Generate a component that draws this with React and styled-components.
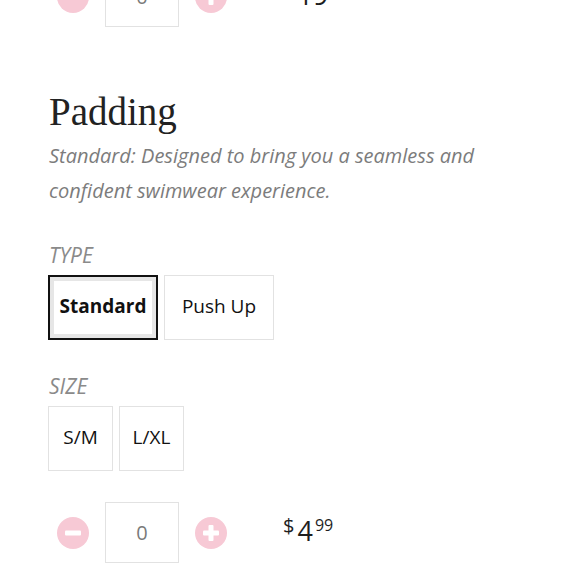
import styled, { createGlobalStyle } from 'styled-components'

const GlobalStyle = createGlobalStyle`
  html, body {
    margin: 0;
    padding: 0;
    background: #fff;
    overflow: hidden;
  }
  body {
    font-family: 'Open Sans', 'Liberation Sans', sans-serif;
  }
`

const Page = styled.div`
  width: 580px;
  height: 580px;
  overflow: hidden;
  padding-left: 48px;
  box-sizing: border-box;
`

const Scroller = styled.div`
  margin-top: -34px;
  display: flex;
  flex-direction: column;
`

const QtyRow = styled.div`
  display: flex;
  align-items: center;
  gap: 7px;
  height: 61px;
  margin-top: ${(props) => props.$top || 0}px;
`

const StepButton = styled.button`
  width: 50px;
  height: 50px;
  padding: 0;
  border: none;
  background: transparent;
  display: flex;
  align-items: center;
  justify-content: center;
  cursor: pointer;
`

const QtyBox = styled.div`
  width: 74px;
  height: 61px;
  box-sizing: border-box;
  border: 1px solid #e2e2e2;
  display: flex;
  align-items: center;
  justify-content: center;
  font-size: 20px;
  color: #7a7a7a;
`

const Price = styled.div`
  margin-left: 40px;
  display: flex;
  align-items: flex-start;
  color: #1e1e1e;
  align-self: flex-start;
  margin-top: 13px;
`

const Currency = styled.span`
  font-size: 20px;
  line-height: 22px;
  margin-right: 3px;
`

const Dollars = styled.span`
  font-size: 27px;
  line-height: 26px;
  margin-top: 3px;
`

const Cents = styled.span`
  font-size: 16px;
  line-height: 18px;
  margin: 1px 0 0 2px;
`

const Heading = styled.h2`
  margin: 62px 0 0 1px;
  font-family: 'Liberation Serif', 'DejaVu Serif', serif;
  font-weight: 400;
  font-size: 39px;
  line-height: 46px;
  color: #222;
`

const Description = styled.p`
  margin: 3px 0 0 1px;
  width: 480px;
  font-style: italic;
  font-size: 20px;
  line-height: 35px;
  color: #7c7c7c;
`

const Label = styled.div`
  margin: ${(props) => props.$top}px 0 0 1px;
  font-style: italic;
  font-size: 21px;
  line-height: 24px;
  color: #8a8a8a;
  text-transform: uppercase;
`

const Options = styled.div`
  display: flex;
  gap: 6px;
  margin-top: 8px;
`

const Option = styled.button`
  width: ${(props) => props.$width}px;
  height: 65px;
  box-sizing: border-box;
  background: #fff;
  border: ${(props) => (props.$active ? '2px solid #111' : '1px solid #e2e2e2')};
  box-shadow: ${(props) => (props.$active ? 'inset 0 0 0 4px #e6e6e6' : 'none')};
  font-family: 'Open Sans', 'Liberation Sans', sans-serif;
  font-size: 19px;
  font-weight: ${(props) => (props.$active ? 700 : 400)};
  color: #111;
  padding: 0 0 4px;
  cursor: pointer;
`

const CircleIcon = ({ plus }) => (
  <svg width='32' height='32' viewBox='0 0 32 32'>
    <circle cx='16' cy='16' r='16' fill='#f7c9d5' />
    <rect x='8' y='13.5' width='16' height='5' rx='1' fill='#fff' />
    {plus && <rect x='13.5' y='8' width='5' height='16' rx='1' fill='#fff' />}
  </svg>
)

const Quantity = ({ top, dollars }) => (
  <QtyRow $top={top}>
    <StepButton>
      <CircleIcon />
    </StepButton>
    <QtyBox>0</QtyBox>
    <StepButton>
      <CircleIcon plus />
    </StepButton>
    <Price>
      <Currency>$</Currency>
      <Dollars>{dollars}</Dollars>
      <Cents>99</Cents>
    </Price>
  </QtyRow>
)

const App = () => {
  return (
    <Page>
      <GlobalStyle />
      <Scroller>
        <Quantity dollars='19' />
        <Heading>Padding</Heading>
        <Description>
          Standard: Designed to bring you a seamless and confident swimwear
          experience.
        </Description>
        <Label $top={35}>Type</Label>
        <Options>
          <Option $width={110} $active>
            Standard
          </Option>
          <Option $width={110}>Push Up</Option>
        </Options>
        <Label $top={34}>Size</Label>
        <Options>
          <Option $width={65}>S/M</Option>
          <Option $width={65}>L/XL</Option>
        </Options>
        <Quantity top={31} dollars='4' />
      </Scroller>
    </Page>
  )
}

export default App
